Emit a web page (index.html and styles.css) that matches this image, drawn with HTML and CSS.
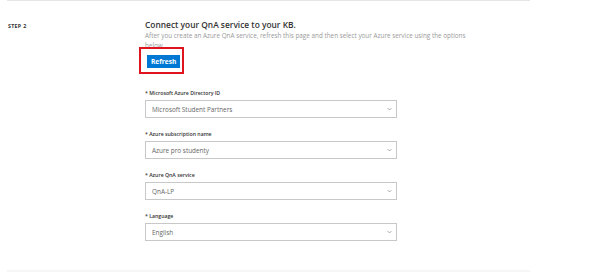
FILE: index.html
```html
<!DOCTYPE html>
<html lang="en">
<head>
    <meta charset="UTF-8">
    <meta name="viewport" content="width=device-width, initial-scale=1.0">
    <title>Create a knowledge base</title>
    <link rel="stylesheet" href="styles.css">
</head>
<body>

<div class="step">
    <div class="step-label">STEP 2</div>

    <div class="step-body">
        <h2>Connect your QnA service to your KB.</h2>
        <p class="hint">After you create an Azure QnA service, refresh this page and then select your Azure service using the options below</p>

        <div class="refresh-wrap">
            <button class="refresh">Refresh</button>
        </div>

        <div class="field">
            <label for="directory">* Microsoft Azure Directory ID</label>
            <div class="select">
                <span>Microsoft Student Partners</span>
                <svg viewBox="0 0 8 5" class="chev"><path d="M1 1l3 3 3-3" /></svg>
            </div>
        </div>

        <div class="field">
            <label for="subscription">* Azure subscription name</label>
            <div class="select">
                <span>Azure pro studenty</span>
                <svg viewBox="0 0 8 5" class="chev"><path d="M1 1l3 3 3-3" /></svg>
            </div>
        </div>

        <div class="field">
            <label for="service">* Azure QnA service</label>
            <div class="select">
                <span>QnA-LP</span>
                <svg viewBox="0 0 8 5" class="chev"><path d="M1 1l3 3 3-3" /></svg>
            </div>
        </div>

        <div class="field">
            <label for="language">* Language</label>
            <div class="select">
                <span>English</span>
                <svg viewBox="0 0 8 5" class="chev"><path d="M1 1l3 3 3-3" /></svg>
            </div>
        </div>
    </div>
</div>

</body>
</html>
```

FILE: styles.css
```css
body {
    font-family: "Open Sans", "Noto Sans", Arial, sans-serif;
    background-color: #fff;
    color: #333;
    margin: 0;
    padding: 0;
}
.step {
    display: grid;
    grid-template-columns: 138px 252px;
    width: 523px;
    margin-left: 7px;
    border-top: 1px solid #e6e6e6;
    border-bottom: 2px solid #f6f6f6;
    padding: 18px 0 29px;
}
.step-label {
    font-size: 5.3px;
    font-weight: 700;
    letter-spacing: 0.3px;
    padding: 3px 0 0 1px;
    color: #333;
}
.step-body h2 {
    margin: 0;
    font-size: 8.4px;
    font-weight: 600;
    color: #333;
    line-height: 12px;
}
.hint {
    margin: 0;
    width: 330px;
    font-size: 6.35px;
    line-height: 10px;
    color: #9a9a9a;
}
.refresh-wrap {
    position: relative;
    width: fit-content;
    margin: 4px 0 0 2px;
}
.refresh-wrap::after {
    content: "";
    position: absolute;
    left: -8px;
    top: -8px;
    width: 41px;
    height: 23px;
    border: 2px solid #e0141e;
}
.refresh {
    display: block;
    background-color: #0078d4;
    color: #fff;
    border: none;
    padding: 0 4px;
    height: 13px;
    font-family: inherit;
    font-size: 6.6px;
    font-weight: 700;
}
.field {
    margin-top: 22px;
}
.field + .field {
    margin-top: 13px;
}
.field label {
    display: block;
    font-size: 5.2px;
    line-height: 7px;
    font-weight: 600;
    color: #333;
    margin-bottom: 3px;
}
.select {
    display: flex;
    align-items: center;
    justify-content: space-between;
    height: 16px;
    border: 1px solid #c8c8c8;
    padding: 0 4px 0 6px;
    font-size: 6.4px;
    color: #666;
}
.chev {
    width: 5px;
    height: 4px;
    fill: none;
    stroke: #777;
    stroke-width: 1;
}
```
